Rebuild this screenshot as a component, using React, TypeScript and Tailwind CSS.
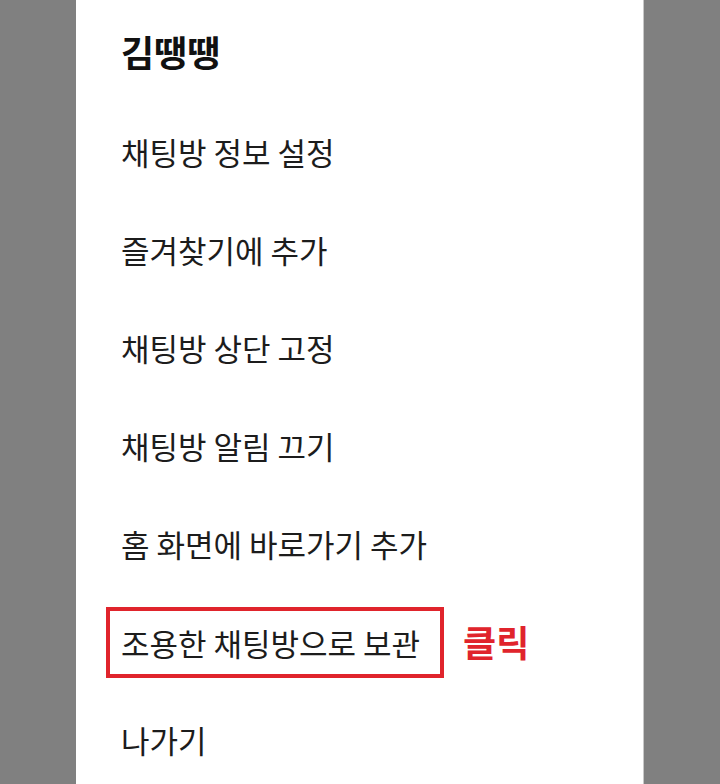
const items = [
  '채팅방 정보 설정',
  '즐겨찾기에 추가',
  '채팅방 상단 고정',
  '채팅방 알림 끄기',
  '홈 화면에 바로가기 추가',
];

export default function App() {
  return (
    <div
      className="w-[720px] h-[784px] bg-[#808080] flex justify-center overflow-hidden"
      style={{ fontFamily: '"Noto Sans CJK KR", "Noto Sans", sans-serif' }}
    >
      <div className="w-[568px] h-full bg-white pl-[45px] text-[#1c1c1c] border-r border-[#c8c8c8]">
        <div className="h-[102px] flex items-center">
          <h1 className="text-[36px] font-bold leading-none text-[#111]">김땡땡</h1>
        </div>
        {items.map((t) => (
          <div key={t} className="h-[98px] flex items-center text-[31px] leading-none">
            {t}
          </div>
        ))}
        <div className="h-[98px] flex items-center text-[31px] leading-none">
          <div className="ml-[-15px] mt-[3px] h-[71px] flex items-center border-4 border-[#e0242c] pl-[11px] pr-[20px]">
            조용한 채팅방으로 보관
          </div>
          <span className="ml-[19px] text-[36px] font-bold text-[#e0242c]">클릭</span>
        </div>
        <div className="h-[98px] flex items-center text-[31px] leading-none">나가기</div>
      </div>
    </div>
  );
}
